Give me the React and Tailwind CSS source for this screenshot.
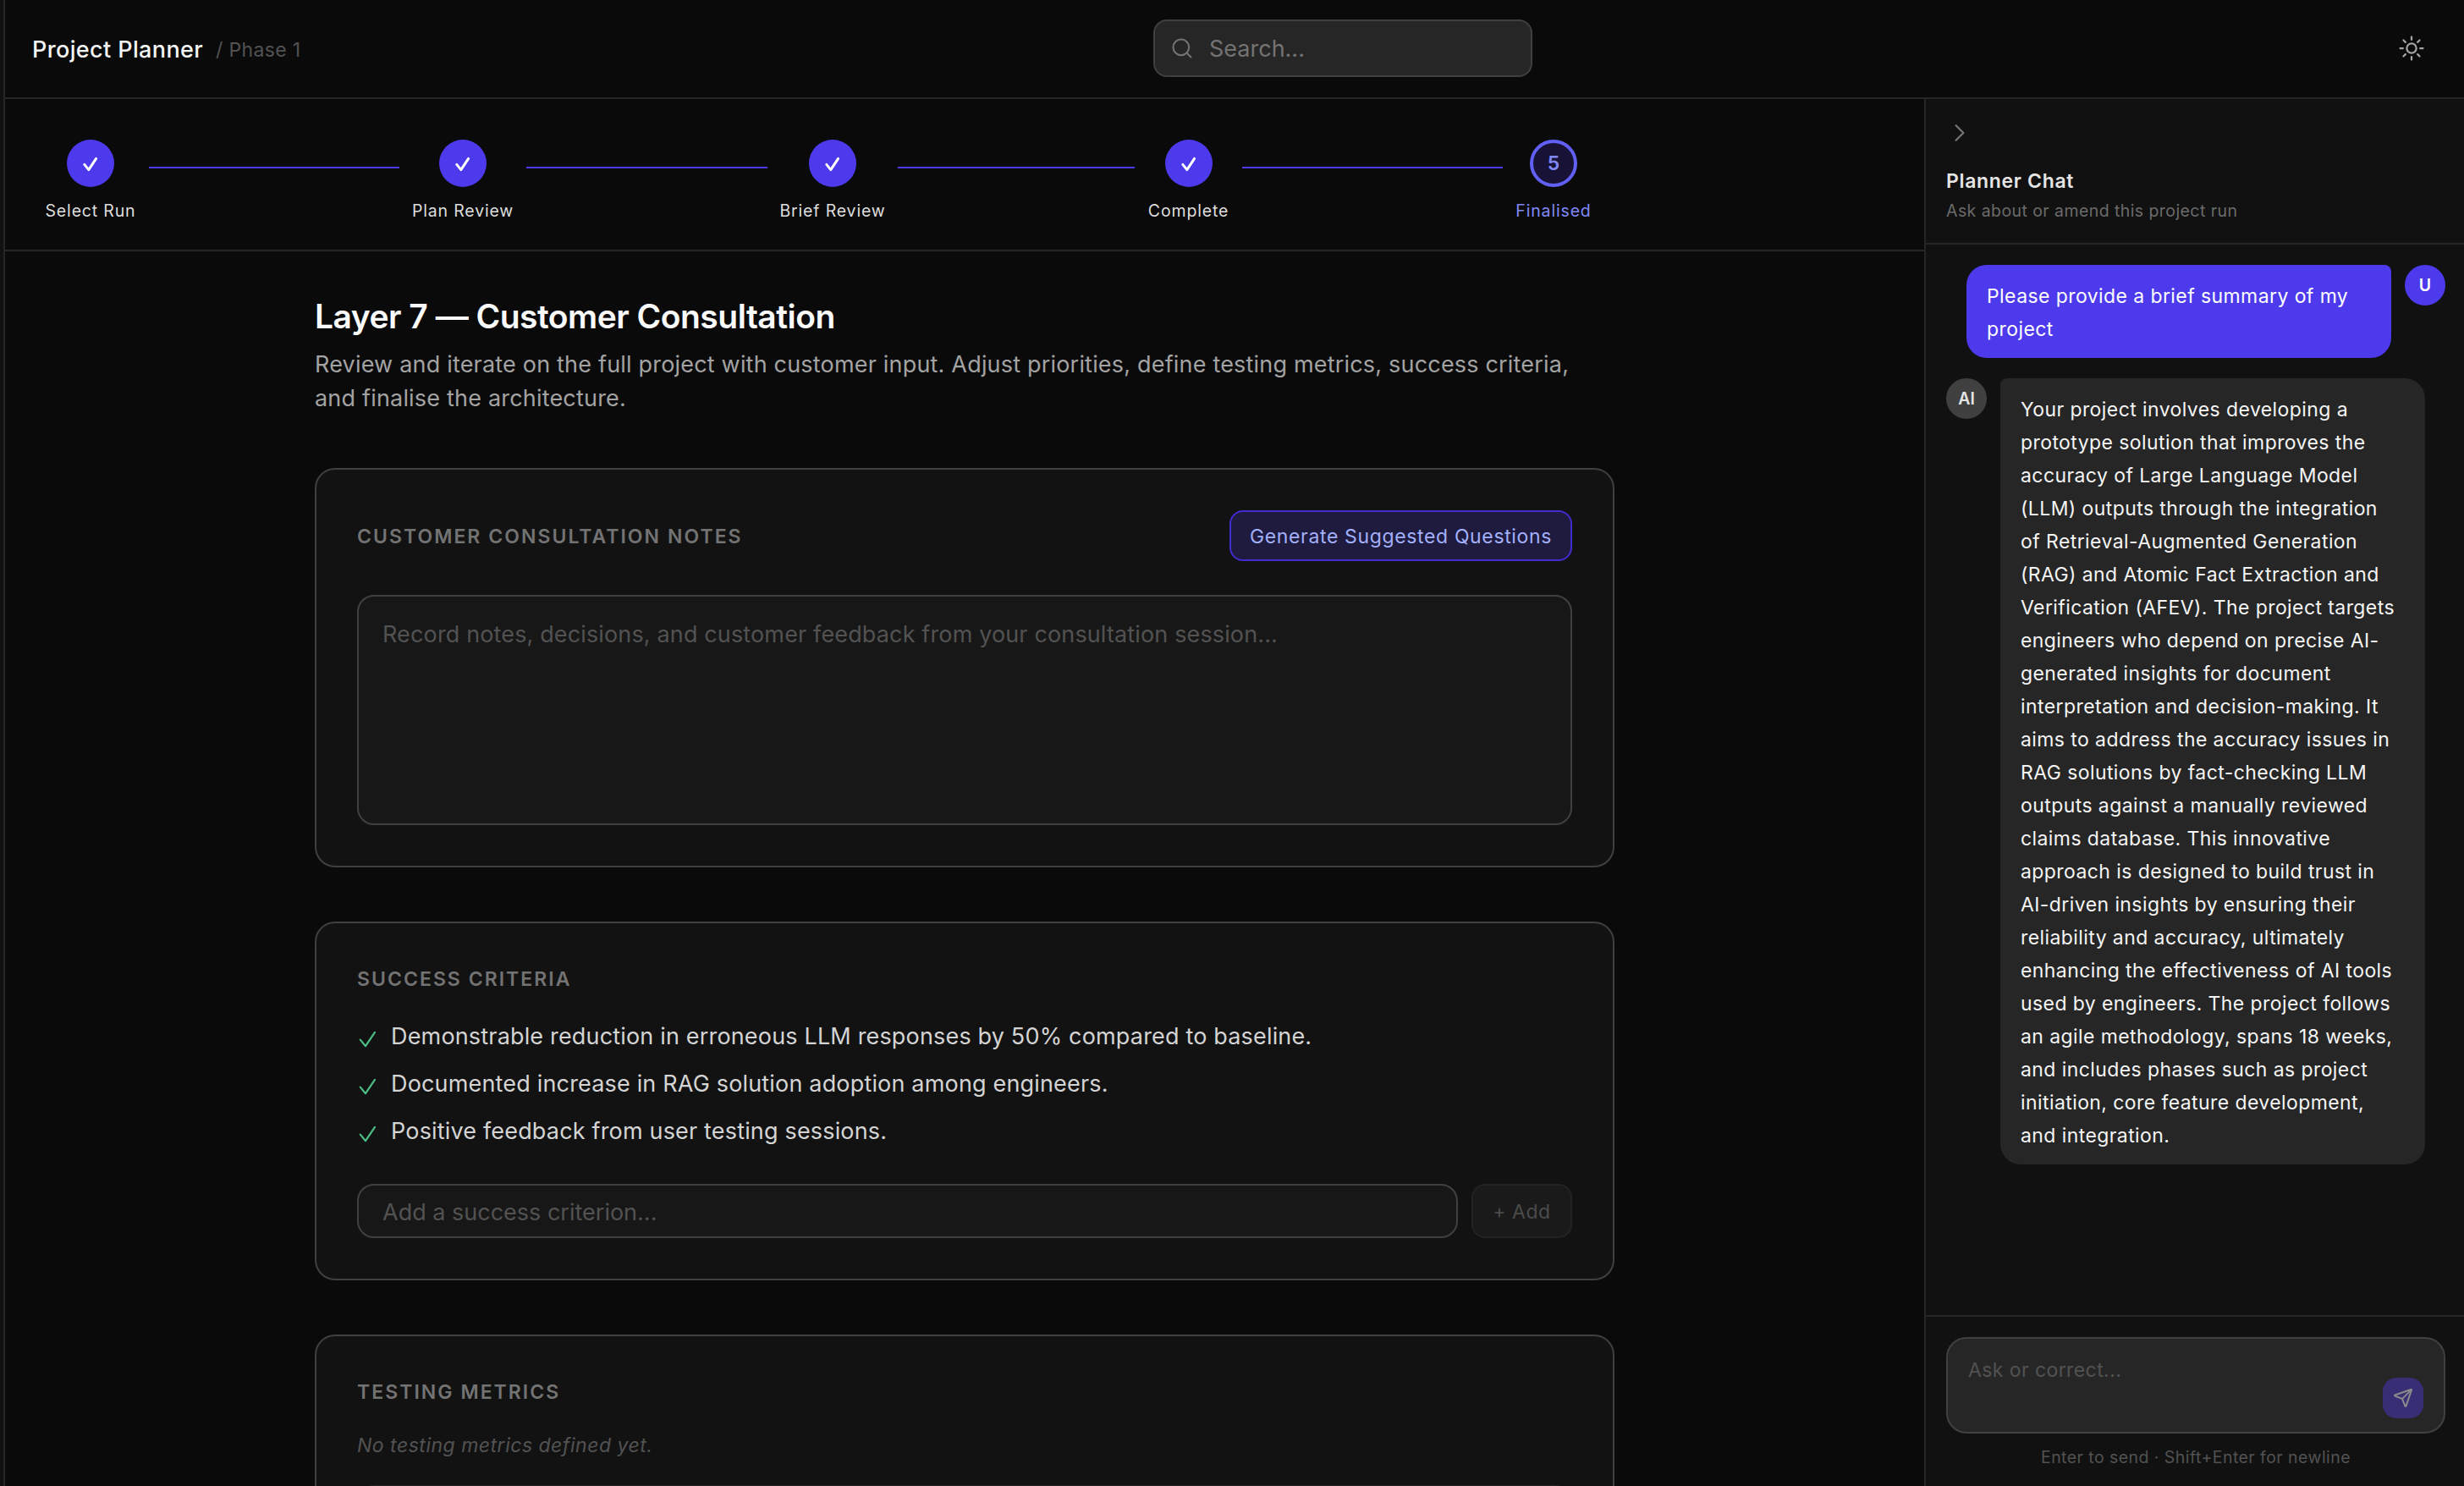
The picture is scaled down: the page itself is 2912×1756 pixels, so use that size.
import { useState } from 'react'
import { Search, Send } from 'lucide-react'

const STEPS = [
  { label: 'Select Run', width: 'w-[106px]' },
  { label: 'Plan Review', width: 'w-[118px]', line: 'w-[296px]' },
  { label: 'Brief Review', width: 'w-[122px]', line: 'w-[285px]' },
  { label: 'Complete', width: 'w-[95px]', line: 'w-[280px]' },
  { label: 'Finalised', width: 'w-[88px]', line: 'w-[308px]', active: true },
]

const CRITERIA = [
  'Demonstrable reduction in erroneous LLM responses by 50% compared to baseline.',
  'Documented increase in RAG solution adoption among engineers.',
  'Positive feedback from user testing sessions.',
]

const MESSAGES = [
  { role: 'user', text: 'Please provide a brief summary of my project' },
  {
    role: 'ai',
    text: 'Your project involves developing a prototype solution that improves the accuracy of Large Language Model (LLM) outputs through the integration of Retrieval-Augmented Generation (RAG) and Atomic Fact Extraction and Verification (AFEV). The project targets engineers who depend on precise AI-generated insights for document interpretation and decision-making. It aims to address the accuracy issues in RAG solutions by fact-checking LLM outputs against a manually reviewed claims database. This innovative approach is designed to build trust in AI-driven insights by ensuring their reliability and accuracy, ultimately enhancing the effectiveness of AI tools used by engineers. The project follows an agile methodology, spans 18 weeks, and includes phases such as project initiation, core feature development, and integration.',
  },
]

function SunIcon() {
  return (
    <svg className="w-9 h-9" viewBox="0 0 24 24" fill="none" stroke="currentColor" strokeWidth="1.5" strokeLinecap="round" strokeLinejoin="round">
      <path d="M12 3v2.25m6.364.386-1.591 1.591M21 12h-2.25m-.386 6.364-1.591-1.591M12 18.75V21m-4.773-4.227-1.591 1.591M5.25 12H3m4.227-4.773L5.636 5.636M15.75 12a3.75 3.75 0 1 1-7.5 0 3.75 3.75 0 0 1 7.5 0Z" />
    </svg>
  )
}

function ChevronIcon() {
  return (
    <svg className="w-7 h-7" viewBox="0 0 24 24" fill="none" stroke="currentColor" strokeWidth="2" strokeLinecap="round" strokeLinejoin="round">
      <path d="m8.25 4.5 7.5 7.5-7.5 7.5" />
    </svg>
  )
}

function StepCheck() {
  return (
    <svg className="w-6 h-6" viewBox="0 0 24 24" fill="none" stroke="currentColor" strokeWidth="3" strokeLinecap="round" strokeLinejoin="round">
      <path d="M4.8 13.4 9.8 19.6 18.6 6.4" />
    </svg>
  )
}

function GreenCheck() {
  return (
    <svg className="w-6 h-6 mt-[6px] shrink-0 text-[#4bbd84]" viewBox="0 0 24 24" fill="none" stroke="currentColor" strokeWidth="2.2" strokeLinecap="round" strokeLinejoin="round">
      <path d="M3.8 12.6 10 20.2 21 3.8" />
    </svg>
  )
}

function Header() {
  return (
    <header className="h-[117px] shrink-0 flex items-center border-b-2 border-[#262626] pl-8 pr-11">
      <div className="w-[1325px] shrink-0 flex items-center gap-[15px] pt-[3px]">
        <h1 className="text-[27px] tracking-[0.014em] font-medium text-[#f5f5f5]">Project Planner</h1>
        <span className="text-[23px] tracking-[0.015em] text-[#525252]">/ Phase 1</span>
      </div>
      <div className="w-[448px] h-[68px] mb-px flex items-center gap-[18px] rounded-2xl border-2 border-[#404040] bg-[#262626] pl-[18px] pr-6">
        <Search className="w-7 h-7 shrink-0 text-[#737373]" strokeWidth={1.75} />
        <input className="w-full bg-transparent outline-none pt-[3px] text-[27px] text-[#e5e5e5] placeholder:text-[#737373]" placeholder="Search..." />
      </div>
      <div className="flex-1 flex justify-end pb-0.5 text-[#a3a3a3]">
        <SunIcon />
      </div>
    </header>
  )
}

function Stepper() {
  return (
    <div className="h-[180px] shrink-0 flex items-start gap-4 border-b-2 border-[#262626] pt-12 pl-12">
      {STEPS.map((step, i) => (
        <div key={step.label} className="flex gap-4">
          {step.line && <div className={`mt-8 h-0.5 ${step.line} bg-[#4c3aec]`} />}
          <div className={`flex flex-col items-center gap-3 ${step.width}`}>
            {step.active ? (
              <div className="w-14 h-14 pt-px flex items-center justify-center rounded-full border-4 border-[#625ff5] bg-[#181336] text-[23px] font-semibold text-[#8189f8]">
                {i + 1}
              </div>
            ) : (
              <div className="w-14 h-14 flex items-center justify-center rounded-full bg-[#4c3aec] text-white">
                <StepCheck />
              </div>
            )}
            <span className={`whitespace-nowrap text-[19.5px] leading-8 tracking-[0.043em] ${step.active ? 'text-[#8189f8]' : 'text-[#dedede]'}`}>
              {step.label}
            </span>
          </div>
        </div>
      ))}
    </div>
  )
}

function Card({ children }) {
  return <section className="rounded-3xl border-2 border-[#404040] bg-[#121212] p-12">{children}</section>
}

function CardTitle({ children }) {
  return <h3 className="pt-[2px] text-[23px] leading-8 tracking-[0.0885em] font-semibold uppercase text-[#737373]">{children}</h3>
}

function Consultation() {
  const [notes, setNotes] = useState('')
  const [criterion, setCriterion] = useState('')

  return (
    <div className="flex-1 min-h-0 overflow-hidden">
      <div className="w-[1536px] ml-[366px] pt-[49px]">
        <h2 className="text-[39px] leading-[56px] tracking-[-0.013em] font-semibold text-[#fafafa]">Layer 7 — Customer Consultation</h2>
        <p className="mt-[9px] text-[27px] leading-10 tracking-[0.007em] text-[#a3a3a3]">
          Review and iterate on the full project with customer input. Adjust priorities, define testing metrics, success criteria, and finalise the architecture.
        </p>

        <div className="mt-[62px] flex flex-col gap-16">
          <Card>
            <div className="flex items-center justify-between">
              <CardTitle>Customer Consultation Notes</CardTitle>
              <button className="h-[60px] w-[405px] rounded-2xl border-2 border-[#412dcf] bg-[#1e1b3e] pt-0.5 text-[23px] tracking-[0.028em] text-[#a3b0fb]">
                Generate Suggested Questions
              </button>
            </div>
            <textarea
              className="block mt-10 w-full h-[272px] resize-none rounded-[20px] border-2 border-[#404040] bg-[#171717] px-7 pt-[25px] outline-none text-[27px] leading-10 tracking-[0.0051em] text-[#e5e5e5] placeholder:text-[#525252]"
              placeholder="Record notes, decisions, and customer feedback from your consultation session..."
              value={notes}
              onChange={(e) => setNotes(e.target.value)}
            />
          </Card>

          <Card>
            <CardTitle>Success Criteria</CardTitle>
            <ul className="mt-[29px] mb-[39px] flex flex-col gap-2.5">
              {CRITERIA.map((c) => (
                <li key={c} className="h-[46px] flex items-center gap-4 text-[27px] tracking-[0.0063em] text-[#d4d4d4]">
                  <GreenCheck />
                  {c}
                </li>
              ))}
            </ul>
            <div className="flex gap-4">
              <input
                className="flex-1 h-16 rounded-[20px] border-2 border-[#404040] bg-[#171717] px-7 pt-[3px] outline-none text-[27px] text-[#e5e5e5] placeholder:text-[#525252]"
                placeholder="Add a success criterion..."
                value={criterion}
                onChange={(e) => setCriterion(e.target.value)}
              />
              <button className="w-[119px] h-16 rounded-2xl border-2 border-[#232323] bg-[#1a1a1a] pt-0.5 text-[23px] tracking-[0.022em] text-[#4b4b4b]">+ Add</button>
            </div>
          </Card>

          <Card>
            <CardTitle>Testing Metrics</CardTitle>
            <p className="mt-[27px] mb-[27px] text-[23px] leading-10 tracking-[0.022em] italic text-[#525252]">No testing metrics defined yet.</p>
            <div className="h-40 rounded-[20px] border-2 border-[#262626] bg-[#171717]" />
          </Card>
        </div>
      </div>
    </div>
  )
}

function Message({ role, text }) {
  const isUser = role === 'user'
  return (
    <div className={`flex items-start gap-4 ${isUser ? 'flex-row-reverse' : ''}`}>
      <div className={`w-12 h-12 pt-0.5 shrink-0 flex items-center justify-center rounded-full text-[19.5px] font-semibold ${isUser ? 'bg-[#4c3aec] text-white' : 'bg-[#404040] text-[#e5e5e5]'}`}>
        {isUser ? 'U' : 'AI'}
      </div>
      <div className={`w-[502px] pl-6 pr-8 pt-[18px] pb-3.5 text-[23px] leading-[39px] tracking-[0.018em] ${isUser ? 'rounded-3xl rounded-tr-lg bg-[#4c3aec] text-white' : 'rounded-3xl rounded-tl-lg bg-[#262626] text-[#f5f5f5]'}`}>
        {text}
      </div>
    </div>
  )
}

function ChatPanel() {
  const [draft, setDraft] = useState('')

  return (
    <aside className="w-[638px] shrink-0 flex flex-col border-l-2 border-[#262626] bg-[#111111]">
      <div className="h-[172px] shrink-0 border-b-2 border-[#262626] pt-6 px-6">
        <button className="w-8 h-8 flex items-center justify-center text-[#737373]">
          <ChevronIcon />
        </button>
        <h2 className="mt-[23px] text-[23px] leading-9 tracking-[0.029em] font-semibold text-[#e5e5e5]">Planner Chat</h2>
        <p className="mt-px text-[19.5px] leading-8 tracking-[0.022em] text-[#6b6b6b]">Ask about or amend this project run</p>
      </div>

      <div className="flex-1 flex flex-col gap-6 pt-6 pl-6 pr-[22px]">
        {MESSAGES.map((m) => <Message key={m.role} {...m} />)}
      </div>

      <div className="h-[202px] shrink-0 border-t-2 border-[#262626] pt-6 pl-6 pr-[22px]">
        <div className="h-[114px] flex items-end rounded-3xl border-2 border-[#404040] bg-[#262626] pr-6">
          <textarea
            className="flex-1 h-full resize-none bg-transparent pl-6 pt-[18px] outline-none text-[23px] leading-[39px] tracking-[0.018em] text-[#e5e5e5] placeholder:text-[#525252]"
            placeholder="Ask or correct..."
            value={draft}
            onChange={(e) => setDraft(e.target.value)}
          />
          <button className="w-12 h-12 mb-4 flex items-center justify-center rounded-2xl bg-[#372e75] text-[#8a8a8a]">
            <Send className="w-6 h-6" strokeWidth={2} />
          </button>
        </div>
        <p className="mt-3 text-center text-[19.5px] leading-8 tracking-[0.023em] text-[#525252]">Enter to send · Shift+Enter for newline</p>
      </div>
    </aside>
  )
}

export default function App() {
  return (
    <div className="w-[2912px] h-[1756px] flex overflow-hidden bg-[#0a0a0a] font-[Inter,'Liberation_Sans',sans-serif]">
      {/* edge of the collapsed sidebar */}
      <div className="w-1.5 shrink-0 border-r-2 border-[#262626] bg-[#111111]" />
      <div className="flex-1 min-w-0 flex flex-col">
        <Header />
        <div className="flex-1 min-h-0 flex">
          <main className="flex-1 min-w-0 flex flex-col">
            <Stepper />
            <Consultation />
          </main>
          <ChatPanel />
        </div>
      </div>
    </div>
  )
}
